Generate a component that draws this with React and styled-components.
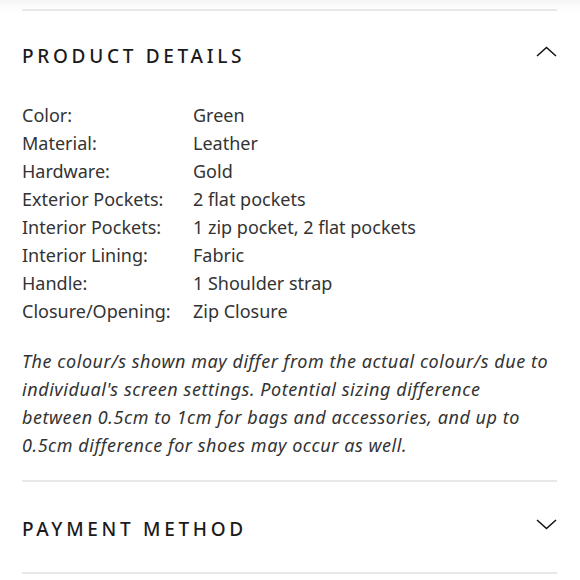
import React from 'react';
import styled, { createGlobalStyle } from 'styled-components';

const GlobalStyle = createGlobalStyle`
  html, body {
    margin: 0;
    padding: 0;
    background: #fff;
  }
  body {
    font-family: 'Noto Sans', 'DejaVu Sans', sans-serif;
    color: #333;
  }
`;

const Page = styled.div`
  width: 580px;
  height: 580px;
  overflow: hidden;
  background: linear-gradient(to bottom, #f4f4f4 0px, #fbfbfb 6px, #fff 14px);
  padding: 9px 23px 0 22px;
  box-sizing: border-box;
`;

const Section = styled.section`
  border-top: 2px solid #e8e8e8;
  &:last-child {
    border-bottom: 2px solid #e8e8e8;
  }
`;

const Header = styled.div`
  height: ${({ $h }) => $h}px;
  padding-top: ${({ $pt = 0 }) => $pt}px;
  box-sizing: border-box;
  display: flex;
  align-items: center;
  justify-content: space-between;
`;

const Title = styled.h2`
  margin: 0;
  font-size: 19px;
  font-weight: 500;
  letter-spacing: 3.7px;
  color: #1b1b1b;
`;

const Chevron = styled.svg`
  width: 21px;
  height: 11px;
  margin-bottom: 9px;
`;

const Body = styled.div`
  padding-bottom: 21px;
`;

const Specs = styled.dl`
  margin: 0;
  display: grid;
  grid-template-columns: 171px 1fr;
  font-size: 18px;
  line-height: 28px;
  color: #333;
  dt, dd {
    margin: 0;
  }
`;

const Note = styled.p`
  margin: 22px 0 0;
  font-style: italic;
  font-size: 18px;
  line-height: 28px;
  letter-spacing: 0.55px;
  color: #333;
  white-space: nowrap;
`;

const specs = [
  ['Color:', 'Green'],
  ['Material:', 'Leather'],
  ['Hardware:', 'Gold'],
  ['Exterior Pockets:', '2 flat pockets'],
  ['Interior Pockets:', '1 zip pocket, 2 flat pockets'],
  ['Interior Lining:', 'Fabric'],
  ['Handle:', '1 Shoulder strap'],
  ['Closure/Opening:', 'Zip Closure'],
];

const noteLines = [
  'The colour/s shown may differ from the actual colour/s due to',
  "individual's screen settings. Potential sizing difference",
  'between 0.5cm to 1cm for bags and accessories, and up to',
  '0.5cm difference for shoes may occur as well.',
];

const Arrow = ({ up }) => (
  <Chevron viewBox="0 0 21 11" fill="none" stroke="#111" strokeWidth="1.5">
    {up ? <path d="M1 10 L10.5 1.5 L20 10" /> : <path d="M1 1 L10.5 9.5 L20 1" />}
  </Chevron>
);

export default function App() {
  return (
    <>
      <GlobalStyle />
      <Page>
        <Section>
          <Header $h={90}>
            <Title>PRODUCT DETAILS</Title>
            <Arrow up />
          </Header>
          <Body>
            <Specs>
              {specs.map(([k, v]) => (
                <React.Fragment key={k}>
                  <dt>{k}</dt>
                  <dd>{v}</dd>
                </React.Fragment>
              ))}
            </Specs>
            <Note>
              {noteLines.map((line, i) => (
                <React.Fragment key={i}>
                  {line}
                  {i < noteLines.length - 1 && <br />}
                </React.Fragment>
              ))}
            </Note>
          </Body>
        </Section>
        <Section>
          <Header $h={90} $pt={3}>
            <Title>PAYMENT METHOD</Title>
            <Arrow />
          </Header>
        </Section>
      </Page>
    </>
  );
}
